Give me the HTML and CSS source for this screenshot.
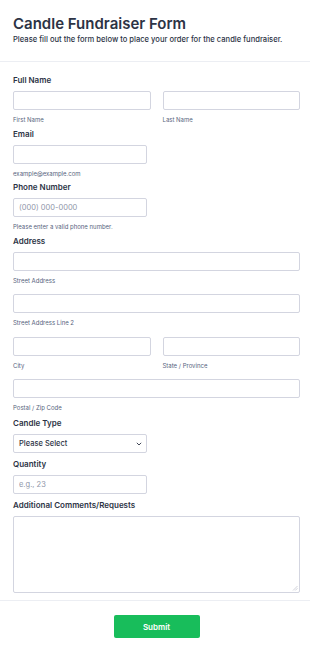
FILE: index.html
```html
<!DOCTYPE html>
<html lang="en">
<head>
<meta charset="utf-8">
<title>Candle Fundraiser Form</title>
<link rel="stylesheet" href="styles.css">
</head>
<body>
<div class="page">
  <header class="header">
    <h1 class="title">Candle Fundraiser Form</h1>
    <p class="subtitle">Please fill out the form below to place your order for the candle fundraiser.</p>
  </header>
  <form class="form">
    <div class="field">
      <label class="label">Full Name</label>
      <div class="row">
        <div class="col">
          <input class="input" type="text">
          <span class="sub">First Name</span>
        </div>
        <div class="col">
          <input class="input" type="text">
          <span class="sub">Last Name</span>
        </div>
      </div>
    </div>
    <div class="field">
      <label class="label">Email</label>
      <input class="input medium" type="text">
      <span class="sub">example@example.com</span>
    </div>
    <div class="field">
      <label class="label">Phone Number</label>
      <input class="input medium" type="text" placeholder="(000) 000-0000">
      <span class="sub">Please enter a valid phone number.</span>
    </div>
    <div class="field address">
      <label class="label">Address</label>
      <input class="input" type="text">
      <span class="sub">Street Address</span>
      <input class="input spaced" type="text">
      <span class="sub">Street Address Line 2</span>
      <div class="row spaced">
        <div class="col">
          <input class="input" type="text">
          <span class="sub">City</span>
        </div>
        <div class="col">
          <input class="input" type="text">
          <span class="sub">State / Province</span>
        </div>
      </div>
      <input class="input spaced" type="text">
      <span class="sub">Postal / Zip Code</span>
    </div>
    <div class="field nosub">
      <label class="label">Candle Type</label>
      <div class="select medium">
        <span>Please Select</span>
        <svg class="chev" width="6" height="4" viewBox="0 0 6 4"><path d="M0.8 0.8 L3 3 L5.2 0.8" fill="none" stroke="#2c3345" stroke-width="0.9"/></svg>
      </div>
    </div>
    <div class="field nosub">
      <label class="label">Quantity</label>
      <input class="input medium" type="text" placeholder="e.g., 23">
    </div>
    <div class="field last">
      <label class="label">Additional Comments/Requests</label>
      <div class="textarea-wrap">
        <textarea class="textarea"></textarea>
        <svg class="grip" width="6" height="6" viewBox="0 0 6 6"><path d="M5.5 1 L1 5.5 M5.5 3.2 L3.2 5.5" stroke="#c5c8d2" stroke-width="0.8"/></svg>
      </div>
    </div>
  </form>
  <div class="footer">
    <button class="submit" type="button">Submit</button>
  </div>
</div>
</body>
</html>
```
FILE: styles.css
```css
* { box-sizing: border-box; }
html, body { margin: 0; padding: 0; background: #fff; }
body { font-family: Inter, "Noto Sans", sans-serif; color: #2c3345; }

.header { padding: 14px 10px 16px 13px; border-bottom: 1px solid #eceef3; }
.title { margin: 0; font-size: 15px; line-height: 20px; font-weight: 600; letter-spacing: 0; }
.subtitle { margin: 1px 0 0; font-size: 7.6px; line-height: 10px; font-weight: 500; }

.form { padding: 12px 10px 0 13px; display: flex; flex-direction: column; }
.field { display: flex; flex-direction: column; margin-bottom: 3.5px; }
.field.address { margin-bottom: 5px; }
.field.nosub { margin-bottom: 5px; }
.field.last { margin-bottom: 7px; }
.label { font-size: 8px; line-height: 12px; font-weight: 600; margin-bottom: 5px; }

.row { display: flex; gap: 12px; }
.col { flex: 1; display: flex; flex-direction: column; min-width: 0; }

.input { width: 100%; height: 19px; border: 1px solid #d3d5e0; border-radius: 2px; padding: 0 5px; font-family: inherit; font-size: 7.5px; color: #2c3345; background: #fff; outline: none; }
.input::placeholder { color: #8f96a8; }
.medium { width: 134px; }
.spaced { margin-top: 9.5px; }
.row.spaced { margin-top: 9.5px; }

.sub { font-size: 6px; line-height: 9px; margin-top: 5px; color: #57647e; }

.select { height: 19px; border: 1px solid #d3d5e0; border-radius: 2px; display: flex; align-items: center; justify-content: space-between; padding: 0 4px 0 5px; font-size: 7.5px; font-weight: 500; }
.chev { display: block; }

.textarea-wrap { position: relative; }
.textarea { width: 100%; height: 77px; border: 1px solid #d3d5e0; border-radius: 2px; resize: none; display: block; outline: none; font-family: inherit; }
.grip { position: absolute; right: 2px; bottom: 2px; display: block; }

.footer { border-top: 1px solid #eceef3; display: flex; justify-content: center; padding: 14px 10px 0 13px; }
.submit { width: 86px; height: 23px; background: #18bd5b; border: none; border-radius: 2px; color: #fff; font-family: inherit; font-size: 8px; font-weight: 600; }
```
